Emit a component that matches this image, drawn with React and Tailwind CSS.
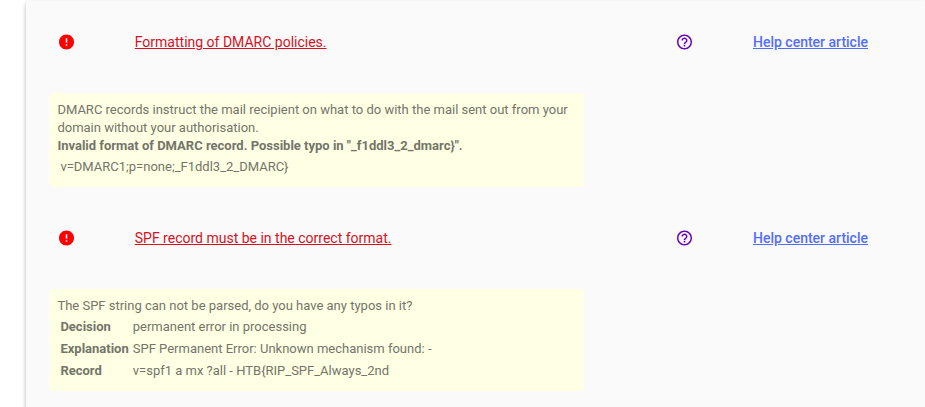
import { MdError, MdHelpOutline } from "react-icons/md";

const checks = [
  {
    title: "Formatting of DMARC policies.",
    intro:
      "DMARC records instruct the mail recipient on what to do with the mail sent out from your domain without your authorisation.",
    problem: 'Invalid format of DMARC record. Possible typo in "_f1ddl3_2_dmarc}".',
    rows: [[null, "v=DMARC1;p=none;_F1ddl3_2_DMARC}"]],
  },
  {
    title: "SPF record must be in the correct format.",
    intro: "The SPF string can not be parsed, do you have any typos in it?",
    rows: [
      ["Decision", "permanent error in processing"],
      ["Explanation", "SPF Permanent Error: Unknown mechanism found: -"],
      ["Record", "v=spf1 a mx ?all - HTB{RIP_SPF_Always_2nd"],
    ],
  },
];

function Check({ title, intro, problem, rows }) {
  return (
    <section className="pb-[10px]">
      <div className="flex h-[82px] items-center text-[14px] leading-5">
        <MdError className="ml-[7px] h-[18px] w-[19px] shrink-0 text-[#ff0000]" />
        <a className="ml-[58.75px] w-[540.25px] text-[#d5121e] underline">{title}</a>
        <MdHelpOutline className="h-[18px] w-[19px] shrink-0 text-[#6c00c0]" />
        <a className="ml-[59px] font-medium whitespace-nowrap text-[#536dfe] underline">
          Help center article
        </a>
      </div>
      <div className="mt-[10px] w-[534px] rounded-[4px] bg-[#ffffe4] px-[7.4px] py-2 text-[13px] leading-[18px] text-[#74756a]">
        <p>{intro}</p>
        {problem && <p className="font-bold">{problem}</p>}
        <table className="border-separate border-spacing-[2px]">
          <tbody>
            {rows.map(([label, value]) => (
              <tr key={value}>
                {label && <th className="p-px text-left font-bold">{label}</th>}
                <td className="p-px">{value}</td>
              </tr>
            ))}
          </tbody>
        </table>
      </div>
    </section>
  );
}

export default function App() {
  return (
    <div className="h-[407px] overflow-hidden bg-white pt-px pl-[26px] font-['Roboto',sans-serif]">
      <main className="h-[420px] rounded-tl-[4px] bg-[#fafafa] pl-6 shadow-[0_2px_4px_rgba(0,0,0,0.3)]">
        {checks.map((check) => (
          <Check key={check.title} {...check} />
        ))}
      </main>
    </div>
  );
}
